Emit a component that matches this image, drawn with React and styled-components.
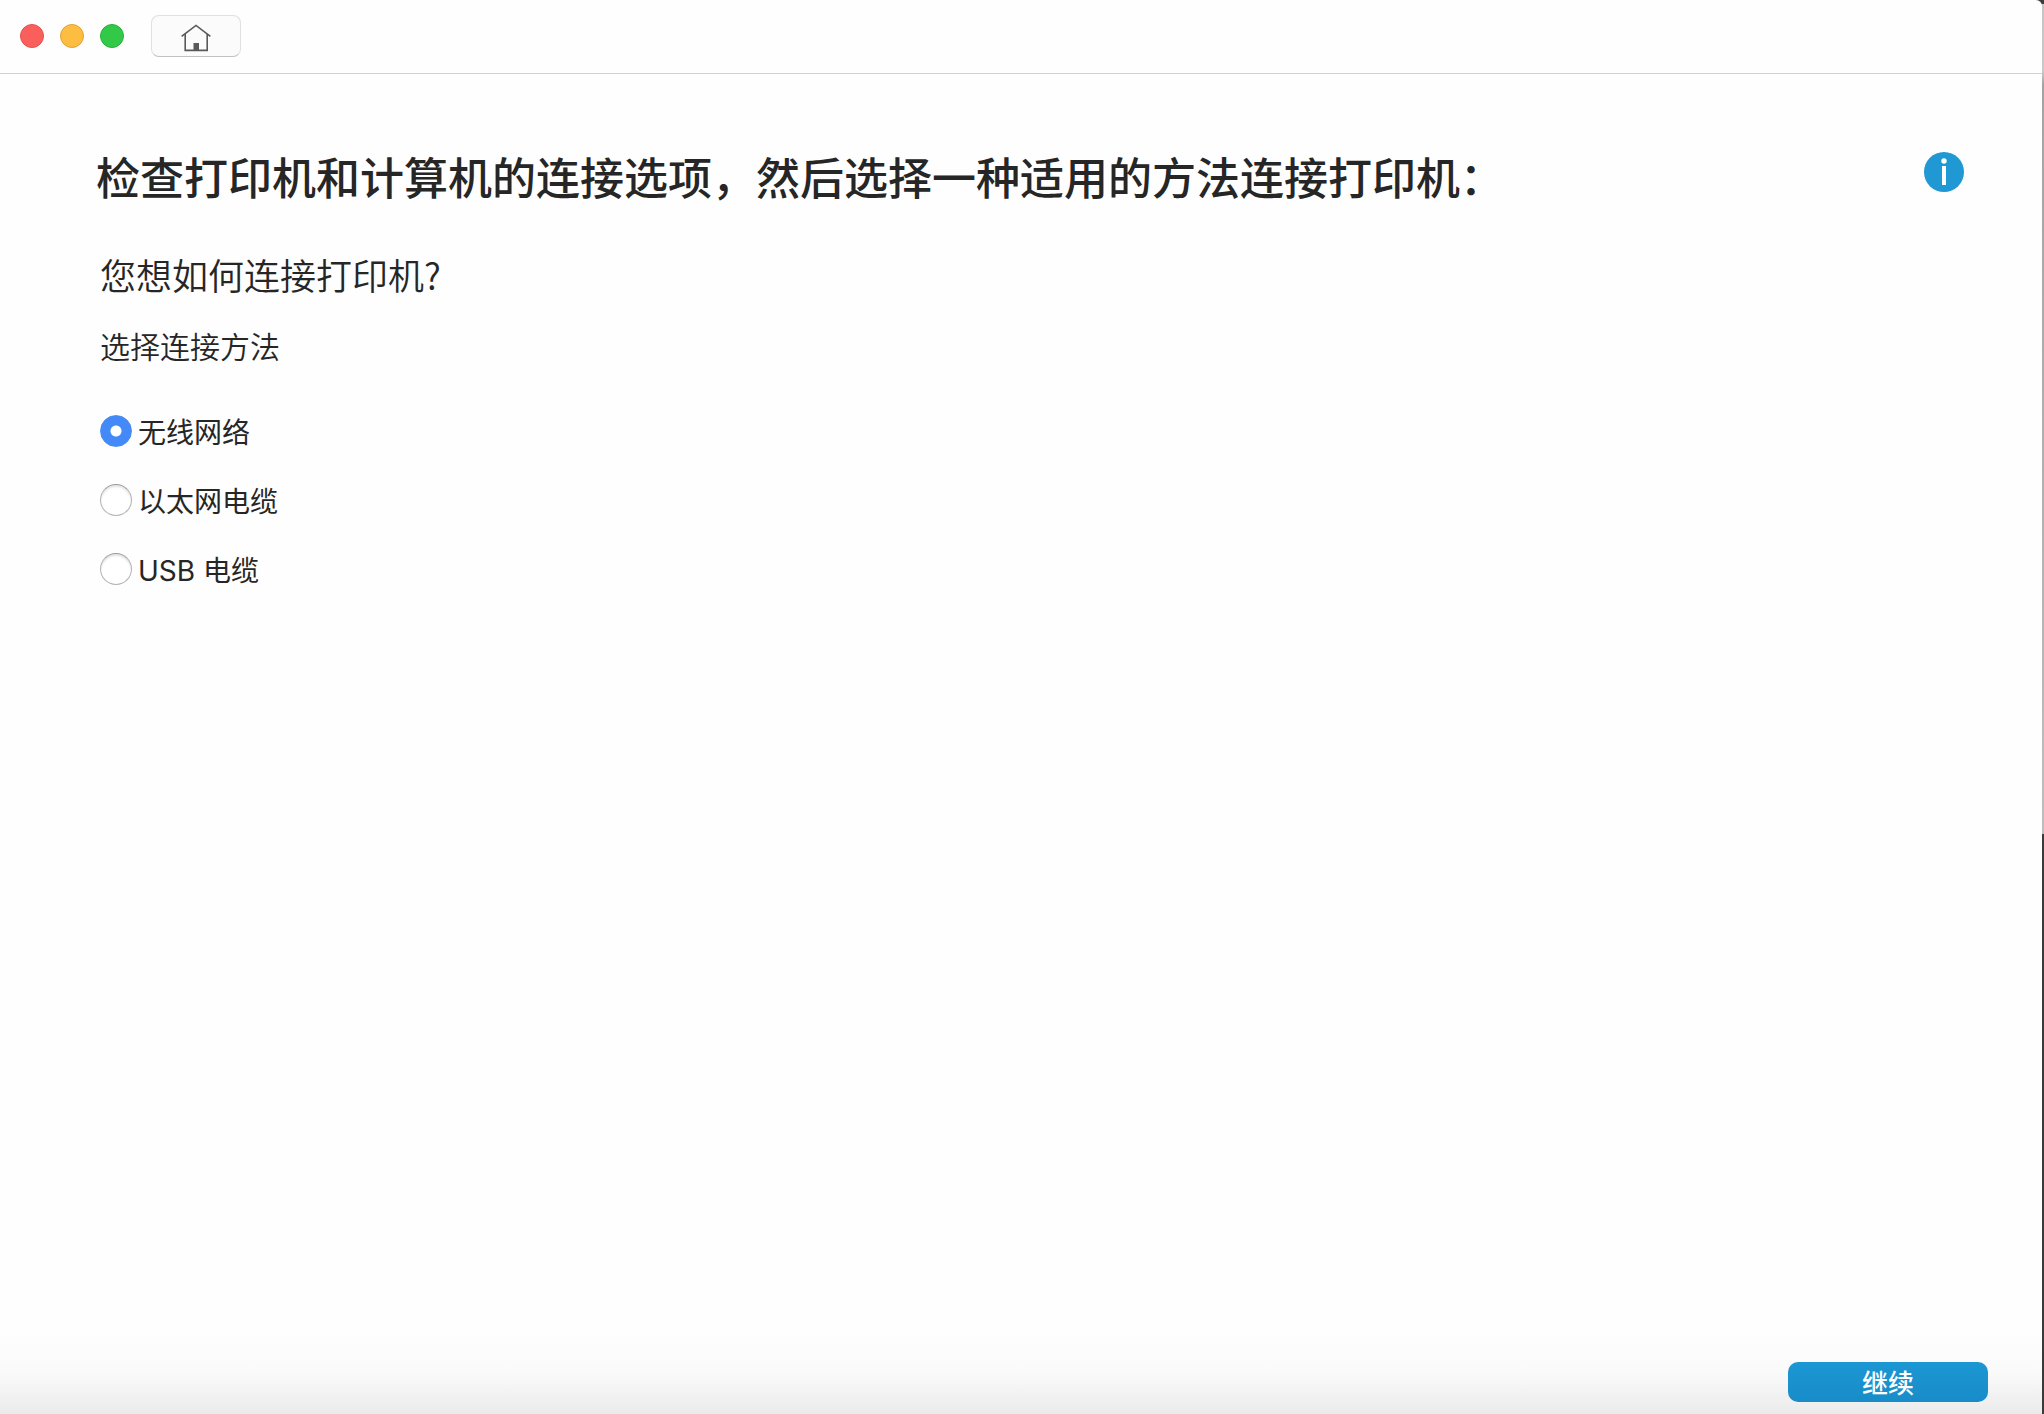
import React, { useState } from 'react';
import styled, { createGlobalStyle } from 'styled-components';

const GlobalStyle = createGlobalStyle`
  * {
    box-sizing: border-box;
  }

  body {
    margin: 0;
    background: #3c3c3c;
    color: #262626;
    font-family: Inter, "Noto Sans CJK SC", sans-serif;
  }
`;

const Desktop = styled.div`
  min-height: 100vh;
  display: flex;
  padding-right: 2px;
  background: linear-gradient(#3c3c3c 0 4px, #c4c4c4 4px, #c9c9c9 5%, #a3a3a3 6%, #bdbdbd 59%, #3a3a3a 59%);
`;

const Window = styled.div`
  flex: 1;
  display: flex;
  flex-direction: column;
  background: #fefefe;
  border-top-right-radius: 6px;
`;

const TitleBar = styled.header`
  display: flex;
  align-items: center;
  height: 74px;
  padding: 0 20px 1px;
  border-bottom: 1px solid #d2d2d2;
`;

const WindowControls = styled.div`
  display: flex;
  gap: 16px;
  margin-right: 27px;
`;

const ControlDot = styled.button`
  width: 24px;
  height: 24px;
  padding: 0;
  border: 1px solid ${({ $border }) => $border};
  border-radius: 50%;
  background: ${({ $color }) => $color};
`;

const HomeButton = styled.button`
  display: flex;
  justify-content: center;
  align-items: center;
  width: 90px;
  height: 42px;
  padding: 4px 0 0;
  border: 1px solid #e0e0e0;
  border-bottom-color: #c2c2c2;
  border-radius: 8px;
  background: #fbfbfb;
`;

const Content = styled.main`
  flex: 1;
  padding: 70px 78px 0 100px;
  font-family: "Noto Sans CJK SC", sans-serif;
`;

const HeadingRow = styled.div`
  display: flex;
  justify-content: space-between;
  align-items: flex-start;
  margin-left: -4px;
`;

const Title = styled.h1`
  margin: 0;
  font-size: 44px;
  font-weight: 500;
  line-height: 64px;
`;

const InfoButton = styled.button`
  flex: none;
  display: flex;
  margin-top: 8px;
  padding: 0;
  border: 0;
  border-radius: 50%;
  background: none;
`;

const Question = styled.h2`
  margin: 40px 0 0;
  font-size: 36px;
  font-weight: 350;
  line-height: 52px;
`;

const Options = styled.fieldset`
  display: flex;
  flex-direction: column;
  align-items: flex-start;
  gap: 29px;
  margin: 23px 0 0;
  padding: 0;
  border: 0;
`;

const Legend = styled.legend`
  margin: 0 0 46px;
  padding: 0;
  font-size: 30px;
  font-weight: 350;
  line-height: 44px;
`;

const Option = styled.label`
  display: flex;
  align-items: center;
  gap: 6px;
  font-family: Inter, "Noto Sans CJK SC", sans-serif;
  font-size: 28px;
  line-height: 40px;
`;

const Radio = styled.input`
  appearance: none;
  width: 32px;
  height: 32px;
  margin: 0 0 4px;
  border: 1px solid #b4b4b4;
  border-top-color: #999999;
  border-radius: 50%;
  background: #ffffff;
  box-shadow: inset 0 2px 2px #e4e4e4;

  &:checked {
    border-color: #4a8cf7;
    background: radial-gradient(circle, #ffffff 5px, #438af8 6px);
    box-shadow: none;
  }
`;

const Footer = styled.footer`
  display: flex;
  justify-content: flex-end;
  padding: 32px 54px 12px;
  background: linear-gradient(#fefefe, #fafafa 50%, #ebebeb);
`;

const ContinueButton = styled.button`
  width: 200px;
  height: 40px;
  padding: 0;
  border: 0;
  border-radius: 10px;
  background: linear-gradient(#1b97d3, #188cc8);
  color: #ffffff;
  font-family: "Noto Sans CJK SC", sans-serif;
  font-size: 26px;
  font-weight: 500;
  line-height: 40px;
`;

const HomeIcon = () => (
  <svg width="30" height="28" viewBox="0 0 30 28" fill="none" stroke="#58595b" strokeWidth="1.6" aria-hidden="true">
    <path d="M0.6 12.3 L15 1.4 L29.4 12.3" />
    <path d="M4.2 10 V26.4 H26.2 V10" />
    <path d="M12.5 19 H18 V26.4 H12.5 Z" fill="#58595b" stroke="none" />
  </svg>
);

const InfoIcon = () => (
  <svg width="40" height="40" viewBox="0 0 40 40" aria-hidden="true">
    <circle cx="20" cy="20" r="20" fill="#1f98d3" />
    <circle cx="20" cy="9" r="2.7" fill="#ffffff" />
    <rect x="18" y="14" width="4" height="19" fill="#ffffff" />
  </svg>
);

const methods = [
  { id: 'wireless', label: '无线网络' },
  { id: 'ethernet', label: '以太网电缆' },
  { id: 'usb', label: 'USB 电缆' },
];

const App = () => {
  const [method, setMethod] = useState('wireless');

  return (
    <>
      <GlobalStyle />
      <Desktop>
        <Window>
          <TitleBar>
            <WindowControls>
              <ControlDot $color="#fb5f5b" $border="#e2524e" aria-label="关闭" />
              <ControlDot $color="#fdbd40" $border="#e0a337" aria-label="最小化" />
              <ControlDot $color="#33c948" $border="#2bb03d" aria-label="缩放" />
            </WindowControls>
            <HomeButton aria-label="主页"><HomeIcon /></HomeButton>
          </TitleBar>

          <Content>
            <HeadingRow>
              <Title>检查打印机和计算机的连接选项，然后选择一种适用的方法连接打印机：</Title>
              <InfoButton aria-label="信息"><InfoIcon /></InfoButton>
            </HeadingRow>
            <Question>您想如何连接打印机?</Question>
            <Options>
              <Legend>选择连接方法</Legend>
              {methods.map(({ id, label }) => (
                <Option key={id} htmlFor={id}>
                  <Radio
                    type="radio"
                    name="method"
                    id={id}
                    checked={method === id}
                    onChange={() => setMethod(id)}
                  />
                  {label}
                </Option>
              ))}
            </Options>
          </Content>

          <Footer>
            <ContinueButton>继续</ContinueButton>
          </Footer>
        </Window>
      </Desktop>
    </>
  );
};

export default App;
